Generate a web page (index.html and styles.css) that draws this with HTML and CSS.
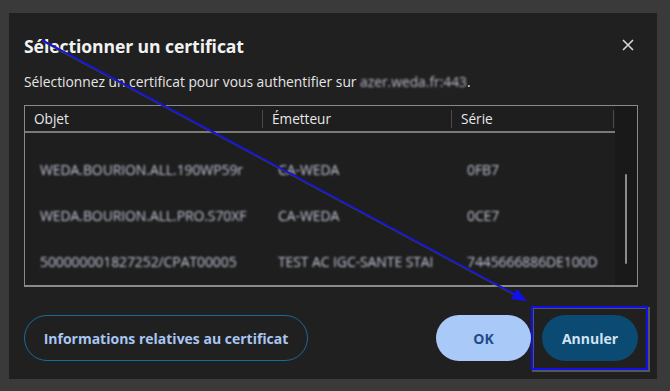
FILE: index.html
```html
<!DOCTYPE html>
<html lang="fr">
<head>
<meta charset="utf-8">
<title>Sélectionner un certificat</title>
<link rel="stylesheet" href="styles.css">
</head>
<body>
<div class="dialog">
  <div class="head">
    <h1 class="title">Sélectionner un certificat</h1>
    <button class="close" aria-label="Fermer">
      <svg width="12" height="12" viewBox="0 0 12 12"><path d="M1 1 L11 11 M11 1 L1 11" stroke="#d8d8d8" stroke-width="1.6" fill="none"/></svg>
    </button>
  </div>
  <p class="subtitle">Sélectionnez un certificat pour vous authentifier sur <span class="blur">azer.weda.fr:443</span>.</p>
  <div class="table">
    <div class="list">
      <div class="thead">
        <div class="th">Objet</div>
        <div class="th">Émetteur</div>
        <div class="th">Série</div>
      </div>
      <div class="rows">
        <div class="tr"><div class="td blur">WEDA.BOURION.ALL.190WP59r</div><div class="td blur">CA-WEDA</div><div class="td blur">0FB7</div></div>
        <div class="tr"><div class="td blur">WEDA.BOURION.ALL.PRO.S70XF</div><div class="td blur">CA-WEDA</div><div class="td blur">0CE7</div></div>
        <div class="tr"><div class="td blur">500000001827252/CPAT00005</div><div class="td blur">TEST AC IGC-SANTE STAI</div><div class="td blur">7445666886DE100D</div></div>
      </div>
    </div>
    <div class="scroll"><div class="thumb"></div></div>
  </div>
  <div class="actions">
    <button class="btn outline">Informations relatives au certificat</button>
    <div class="right">
      <button class="btn primary">OK</button>
      <button class="btn cancel">Annuler</button>
    </div>
  </div>
</div>
<svg class="annot" width="670" height="391" viewBox="0 0 670 391">
  <rect x="533" y="308" width="116" height="63" fill="none" stroke="#555" stroke-width="2"/>
  <line x1="42" y1="40" x2="522" y2="298" stroke="#444" stroke-width="2" transform="translate(1,1)"/>
  <line x1="42" y1="40" x2="522" y2="298" stroke="#1010ee" stroke-width="1.6"/>
  <path d="M527 301 L511 299 L517 289 Z" fill="#1010ee"/>
  <rect x="532" y="307" width="115" height="62" fill="none" stroke="#1010ee" stroke-width="2"/>
</svg>
</body>
</html>
```
FILE: styles.css
```css
html, body {
  margin: 0;
  padding: 0;
}
body {
  width: 670px;
  height: 391px;
  background: #3a3a3a;
  font-family: "Open Sans", "Noto Sans", sans-serif;
  overflow: hidden;
  position: relative;
}
.dialog {
  margin: 13px 0 0 9px;
  width: 648px;
  height: 366px;
  box-sizing: border-box;
  background: #202020;
  padding: 0 19px 0 15px;
  display: flex;
  flex-direction: column;
}
.head {
  display: flex;
  align-items: center;
  justify-content: space-between;
  height: 40px;
  margin-top: 13px;
}
.title {
  margin: 0;
  font-size: 17.6px;
  font-weight: 700;
  color: #f2f2f2;
  letter-spacing: -0.1px;
}
.close {
  background: none;
  border: 0;
  padding: 0;
  margin-right: 4px;
  margin-bottom: 3px;
  width: 12px;
  height: 12px;
  display: flex;
}
.subtitle {
  margin: 6px 0 0;
  font-size: 13.8px;
  color: #e6e6e6;
  line-height: 20px;
}
.blur {
  filter: blur(0.8px);
}
.subtitle .blur {
  color: #b8b8c8;
}
.table {
  margin-top: 13px;
  height: 182px;
  box-sizing: border-box;
  border: 1.5px solid #8a8a8a;
  border-bottom-width: 2px;
  display: flex;
  background: #1e1e1e;
}
.list {
  flex: 1;
  display: flex;
  flex-direction: column;
}
.thead {
  display: grid;
  grid-template-columns: 238px 189px 162px;
  height: 25px;
  border-bottom: 2px solid #7a7a7a;
  align-items: center;
}
.th {
  font-size: 13.6px;
  color: #e8e8e8;
  padding-left: 9px;
  border-right: 1px solid #4a4a4a;
  line-height: 18px;
}
.rows {
  padding-top: 13px;
}
.tr {
  display: grid;
  grid-template-columns: 238px 189px 162px;
  height: 46px;
  align-items: center;
}
.td {
  font-size: 14px;
  color: #c0c4d4;
  padding-left: 15px;
  white-space: nowrap;
  overflow: hidden;
  letter-spacing: -0.1px;
}
.scroll {
  width: 22px;
  background: #191919;
  position: relative;
}
.thumb {
  position: absolute;
  left: 10px;
  top: 68px;
  width: 2px;
  height: 90px;
  background: #8c8c8c;
  border-radius: 1px;
}
.actions {
  margin-top: 28px;
  display: flex;
  justify-content: space-between;
  align-items: center;
}
.right {
  display: flex;
  gap: 11px;
}
.btn {
  height: 46px;
  border-radius: 23px;
  font-family: "Open Sans", "Noto Sans", sans-serif;
  font-size: 14px;
  font-weight: 700;
  padding: 0;
  box-sizing: border-box;
}
.outline {
  width: 284px;
  background: transparent;
  border: 1.5px solid #1b6a9c;
  color: #a9c6f2;
}
.primary {
  width: 95px;
  background: #a9c9f9;
  border: 0;
  color: #1f4c86;
}
.cancel {
  width: 96px;
  background: #0b4a73;
  border: 0;
  color: #d2e2f2;
}
.annot {
  position: absolute;
  left: 0;
  top: 0;
  pointer-events: none;
}
```
